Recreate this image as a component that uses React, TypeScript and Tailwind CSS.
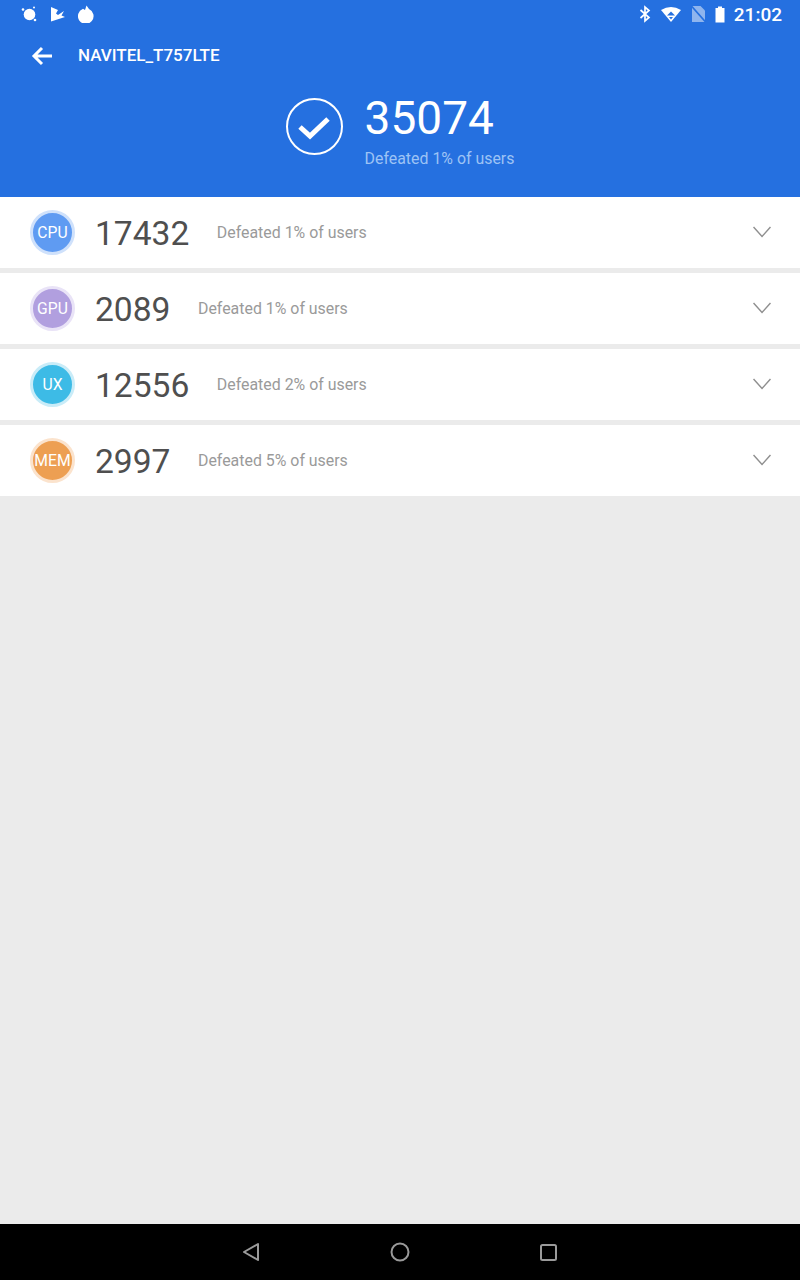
const rows = [
  { label: "CPU", score: "17432", pct: "1%", fill: "bg-[#5f9bf2]", ring: "border-[#cfe1fb]" },
  { label: "GPU", score: "2089", pct: "1%", fill: "bg-[#b19fdf]", ring: "border-[#e9e3f7]" },
  { label: "UX", score: "12556", pct: "2%", fill: "bg-[#3dbbe6]", ring: "border-[#c9ecf8]" },
  { label: "MEM", score: "2997", pct: "5%", fill: "bg-[#ed9f52]", ring: "border-[#fbe3cd]" },
];

function StatusLeftIcons() {
  return (
    <div className="flex items-center gap-[12px]">
      <svg width="18" height="18" viewBox="0 0 18 18" fill="#fff">
        <circle cx="9.5" cy="9.5" r="5.8" />
        <circle cx="3" cy="4.5" r="1.3" />
        <circle cx="14" cy="2.5" r="1" />
        <circle cx="15" cy="15" r="1.3" />
      </svg>
      <svg width="16" height="16" viewBox="0 0 16 16" fill="#fff">
        <path d="M1 1 L8 4 L6 7.5 L8 9 L14 5 L11.5 9.5 L15 11 L1 15.5 Z" />
      </svg>
      <svg width="17" height="18" viewBox="0 0 17 18" fill="#fff">
        <path d="M8.5 0.5 L11 4 A7.8 7.8 0 1 1 5 3.8 L7 5 Z" />
      </svg>
    </div>
  );
}

function StatusRightIcons() {
  return (
    <div className="flex items-center gap-[9px]">
      <svg width="12" height="18" viewBox="0 0 12 18" fill="none" stroke="#fff" strokeWidth="1.7">
        <path d="M1.5 5 L10 12.5 L6 16 V2 L10 5.5 L1.5 13" />
      </svg>
      <svg width="22" height="16" viewBox="0 0 22 16">
        <path d="M1 4 Q11 -2 21 4 L11 16 Z" fill="#fff" />
        <path d="M11 5.5 L15 9.5 H7 Z" fill="#2570e0" />
        <path d="M9 11 H13 L11 13.5 Z" fill="#2570e0" />
      </svg>
      <svg width="15" height="18" viewBox="0 0 15 18">
        <path d="M1 1 H9.5 L14 5.5 V17 H1 Z" fill="#8fb5ee" />
        <path d="M0.5 1 L14.5 17" stroke="#2570e0" strokeWidth="1.6" />
      </svg>
      <svg width="10" height="17" viewBox="0 0 10 17" fill="#fff">
        <path d="M3 0.5 H7 V2 H9.5 V16.5 H0.5 V2 H3 Z" />
      </svg>
    </div>
  );
}

export default function App() {
  return (
    <div className="flex flex-col h-[1280px] w-[800px] bg-[#ebebeb] font-['Roboto',sans-serif]">
      {/* Header */}
      <header className="h-[197px] bg-[#2570e0] text-white flex flex-col">
        <div className="h-[28px] flex items-center justify-between pl-[20px] pr-[18px]">
          <StatusLeftIcons />
          <div className="flex items-center gap-[9px]">
            <StatusRightIcons />
            <span className="text-[19px] font-medium leading-none">21:02</span>
          </div>
        </div>

        <div className="h-[56px] flex items-center pl-[31px]">
          <svg width="22" height="20" viewBox="0 0 22 20" fill="none" stroke="#fff" strokeWidth="3">
            <path d="M21 10 H3 M11 2 L3 10 L11 18" />
          </svg>
          <span className="ml-[25px] text-[17px] font-medium">NAVITEL_T757LTE</span>
        </div>

        <div className="flex items-start justify-center">
          <div className="mt-[14px] mr-[22px] w-[57px] h-[57px] rounded-full border-2 border-white flex items-center justify-center">
            <svg width="34" height="28" viewBox="0 0 34 28" fill="none" stroke="#fff" strokeWidth="5">
              <path d="M3 14 L13 23 L31 6" />
            </svg>
          </div>
          <div className="flex flex-col pt-[7px]">
            <span className="text-[46px] leading-[54px]">35074</span>
            <span className="text-[15.9px] leading-[20px] mt-[4px] text-[#9dc3f5]">Defeated 1% of users</span>
          </div>
        </div>
      </header>

      {/* Score rows */}
      <div className="flex flex-col gap-[5px] bg-[#ebebeb]">
        {rows.map((r) => (
          <div key={r.label} className="h-[71px] bg-white flex items-center pl-[30px] pr-[29.5px]">
            <div className={`w-[45px] h-[45px] rounded-full border-[3px] flex items-center justify-center text-white ${r.fill} ${r.ring}`}>
              <span className="text-[15.7px]">{r.label}</span>
            </div>
            <span className="ml-[20px] pt-[2px] text-[33.6px] text-[#4f4f4f] leading-none">{r.score}</span>
            <span className="ml-[27.5px] text-[15.9px] text-[#9a9a9a]">Defeated {r.pct} of users</span>
            <svg className="ml-auto mb-[2px]" width="18" height="12" viewBox="0 0 18 12" fill="none" stroke="#8f8f8f" strokeWidth="1.5">
              <path d="M0.5 1 L9 10.5 L17.5 1" />
            </svg>
          </div>
        ))}
      </div>

      <div className="flex-1" />

      {/* Nav bar */}
      <div className="h-[56px] bg-black flex items-center justify-center">
        <div className="flex items-center gap-[130px] pr-[2px]">
          <svg width="18" height="20" viewBox="0 0 18 20" fill="none" stroke="#9a9a9a" strokeWidth="2">
            <path d="M16 2 L2 10 L16 18 Z" strokeLinejoin="round" />
          </svg>
          <svg width="20" height="20" viewBox="0 0 20 20" fill="none" stroke="#9a9a9a" strokeWidth="2">
            <circle cx="10" cy="10" r="8.5" />
          </svg>
          <svg width="17" height="17" viewBox="0 0 17 17" fill="none" stroke="#9a9a9a" strokeWidth="2">
            <rect x="1" y="1" width="15" height="15" rx="1.5" />
          </svg>
        </div>
      </div>
    </div>
  );
}
